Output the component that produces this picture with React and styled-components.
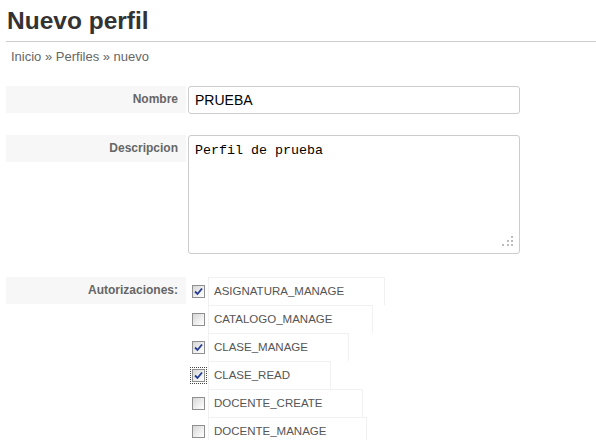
import React from 'react';
import styled, { createGlobalStyle } from 'styled-components';

const GlobalStyle = createGlobalStyle`
  body {
    margin: 0;
    background: #fff;
    font-family: "Liberation Sans", Arial, sans-serif;
  }
`;

const Page = styled.div`
  padding-left: 6px;
`;

const Title = styled.h1`
  margin: 0;
  padding: 7px 0 6px 1px;
  font-size: 24.5px;
  line-height: 28px;
  font-weight: bold;
  color: #333;
  border-bottom: 1px solid #ccc;
`;

const Breadcrumb = styled.div`
  margin-top: 7px;
  padding-left: 5px;
  font-size: 13px;
  line-height: 16px;
  color: #666;
`;

const Form = styled.form`
  margin-top: 21px;
  display: flex;
  flex-direction: column;
`;

const Row = styled.div`
  display: grid;
  grid-template-columns: 180px 332px;
  column-gap: 2px;
  align-items: start;
  margin-bottom: ${(p) => p.$gap || 0}px;
`;

const Label = styled.label`
  display: block;
  height: 27px;
  line-height: 27px;
  padding-right: 8px;
  text-align: right;
  background: #f7f7f7;
  font-size: 12px;
  font-weight: bold;
  color: #666;
`;

const TextInput = styled.input`
  box-sizing: border-box;
  width: 100%;
  height: 28px;
  padding: 0 6px;
  border: 1px solid #ccc;
  border-radius: 3px;
  font-family: "Liberation Sans", Arial, sans-serif;
  font-size: 14px;
  color: #000;
  outline: none;
`;

const AreaWrap = styled.div`
  position: relative;
  height: 119px;
`;

const TextArea = styled.textarea`
  box-sizing: border-box;
  display: block;
  width: 100%;
  height: 100%;
  padding: 7px 6px;
  border: 1px solid #ccc;
  border-radius: 3px;
  font-family: "Liberation Mono", "Courier New", monospace;
  font-size: 13.33px;
  line-height: 15px;
  color: #000;
  resize: none;
  outline: none;
`;

const Grip = styled.svg`
  position: absolute;
  right: 6px;
  bottom: 6px;
`;

const CheckList = styled.div`
  display: flex;
  flex-direction: column;
`;

const CheckItem = styled.div`
  display: flex;
  align-items: center;
  height: 28px;
`;

const Box = styled.span`
  box-sizing: border-box;
  width: 13px;
  height: 13px;
  margin: 0 3px 0 4px;
  border: 1px solid #8f8f8f;
  background: linear-gradient(135deg, #d6d6d6 0%, #f4f4f4 70%, #fff 100%);
  display: flex;
  align-items: center;
  justify-content: center;
  outline: ${(p) => (p.$focus ? '1px dotted #444' : 'none')};
  outline-offset: 1px;
`;

const CheckLabel = styled.span`
  box-sizing: border-box;
  height: 28px;
  line-height: 27px;
  padding: 0 40px 0 5px;
  border: 1px solid #f1f1f1;
  border-bottom: none;
  font-size: 11.5px;
  color: #555;
`;

const permisos = [
  { name: 'ASIGNATURA_MANAGE', checked: true },
  { name: 'CATALOGO_MANAGE', checked: false },
  { name: 'CLASE_MANAGE', checked: true },
  { name: 'CLASE_READ', checked: true, focus: true },
  { name: 'DOCENTE_CREATE', checked: false },
  { name: 'DOCENTE_MANAGE', checked: false },
];

const Check = () => (
  <svg width="9" height="9" viewBox="0 0 9 9">
    <path d="M1 4.5 L3.5 7 L8 1.5" fill="none" stroke="#233c94" strokeWidth="1.8" />
  </svg>
);

const App = () => (
  <>
    <GlobalStyle />
    <Page>
      <Title>Nuevo perfil</Title>
      <Breadcrumb>Inicio » Perfiles » nuevo</Breadcrumb>

      <Form>
        <Row $gap={21}>
          <Label>Nombre</Label>
          <TextInput defaultValue="PRUEBA" />
        </Row>

        <Row $gap={23}>
          <Label>Descripcion</Label>
          <AreaWrap>
            <TextArea defaultValue="Perfil de prueba" />
            <Grip width="12" height="12" viewBox="0 0 12 12">
              <g fill="#bbb">
                <rect x="9" y="0" width="2" height="2" />
                <rect x="5" y="4" width="2" height="2" />
                <rect x="9" y="4" width="2" height="2" />
                <rect x="0" y="8" width="2" height="2" />
                <rect x="5" y="8" width="2" height="2" />
                <rect x="9" y="8" width="2" height="2" />
              </g>
            </Grip>
          </AreaWrap>
        </Row>

        <Row>
          <Label>Autorizaciones:</Label>
          <CheckList>
            {permisos.map((p) => (
              <CheckItem key={p.name}>
                <Box $focus={p.focus}>{p.checked && <Check />}</Box>
                <CheckLabel>{p.name}</CheckLabel>
              </CheckItem>
            ))}
          </CheckList>
        </Row>
      </Form>
    </Page>
  </>
);

export default App;
